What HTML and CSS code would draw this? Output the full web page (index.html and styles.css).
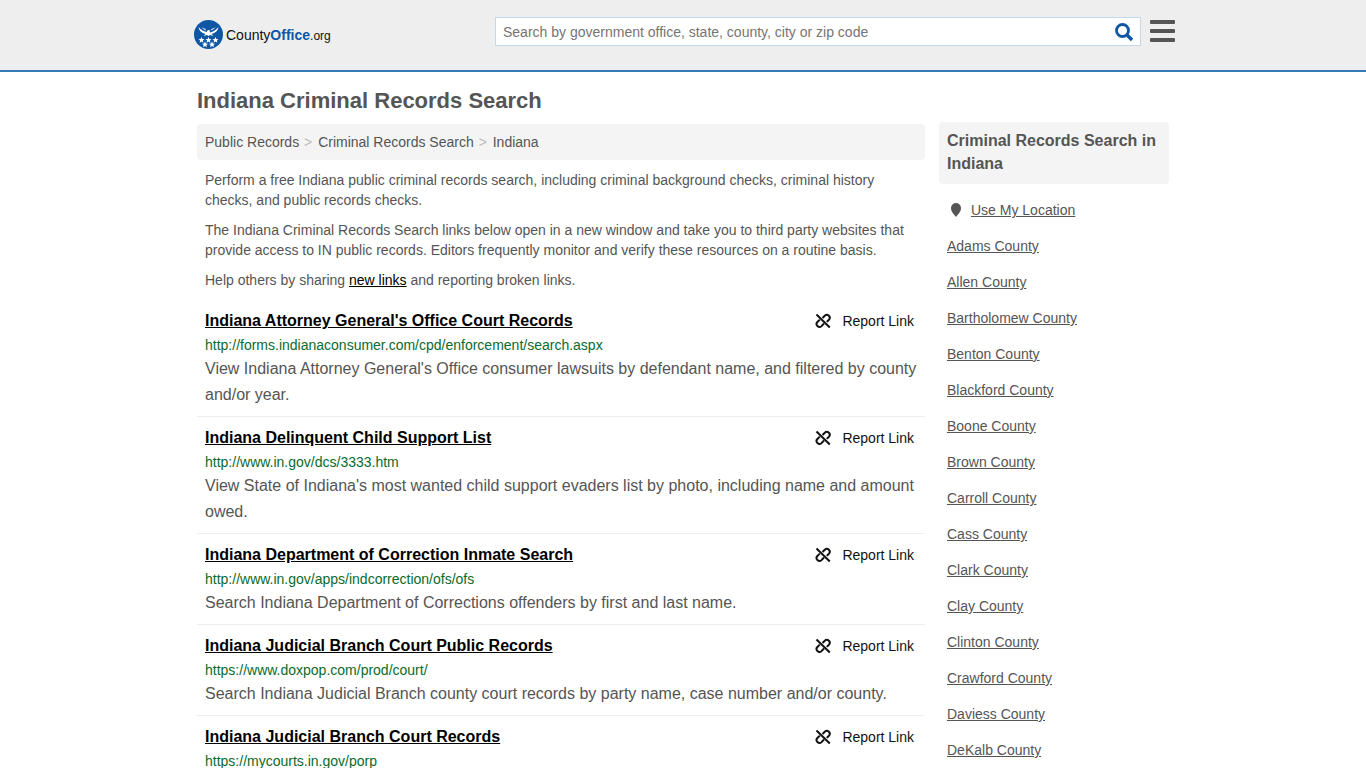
FILE: index.html
```html
<!DOCTYPE html>
<html lang="en">
<head>
    <meta charset="UTF-8">
    <meta name="viewport" content="width=device-width, initial-scale=1.0">
    <title>Indiana Criminal Records Search</title>
    <link rel="stylesheet" href="styles.css">
</head>
<body>

    <!-- icons used more than once -->
    <svg class="sprite" aria-hidden="true">
        <symbol id="broken-link" viewBox="0 0 16 16">
            <g fill="none" stroke="#111" stroke-width="2">
                <path d="M1.500 1.500 14.800 14.500"/>
                <path d="M7.500 5 9.800 2.700a2.900 2.900 0 0 1 4.100 4.100L11.800 8.900"/>
                <path d="M9 10.500 6.500 13.100a2.900 2.900 0 0 1-4.100-4.100L4.800 6.600"/>
            </g>
        </symbol>
    </svg>

    <header class="header">
        <div class="container header-row">
            <a class="logo" href="#" aria-label="CountyOffice.org">
                <svg class="logo-icon" viewBox="0 0 58 58" aria-hidden="true">
                    <circle cx="29" cy="29" r="29" fill="#0f57a5"/>
                    <g fill="#fff">
                        <path d="M9 14c5 6 10 8 16 10l2-3 3-1 3 2-2 1 1 2c7-2 12-5 17-11-1 7-6 12-14 14l4 4-7-2-3 2-3-2-7 2 4-4C15 26 10 21 9 14z"/>
                        <path d="M14 13c3 4 6 6 10 8l-1-3c-4-1-7-3-9-5zM44 13c-3 4-6 6-10 8l1-3c4-1 7-3 9-5z"/>
                        <path id="star" d="M15 34l1.800 4 4.200.4-3.200 2.800.9 4.200-3.700-2.200-3.700 2.200.9-4.200-3.200-2.800 4.200-.4z"/>
                        <use href="#star" x="14"/>
                        <use href="#star" x="28"/>
                        <use href="#star" x="7" y="9"/>
                        <use href="#star" x="21" y="9"/>
                    </g>
                </svg>
                <span class="logo-text">County<b>Office</b><span class="logo-org">.org</span></span>
            </a>
            <form class="search">
                <input class="search-input" type="text" aria-label="Search" placeholder="Search by government office, state, county, city or zip code">
                <button class="search-btn" type="submit" aria-label="Submit search">
                    <svg width="18" height="18" viewBox="0 0 18 18" aria-hidden="true">
                        <g fill="none" stroke="#0f57a5">
                            <circle cx="7.500" cy="7.500" r="6" stroke-width="2.800"/>
                            <path d="M12 12l5 5" stroke-width="3.400"/>
                        </g>
                    </svg>
                </button>
            </form>
            <button class="menu-btn" type="button" aria-label="Menu">
                <span></span><span></span><span></span>
            </button>
        </div>
    </header>

    <div class="container page">
        <main class="main">
            <h1>Indiana Criminal Records Search</h1>
            <nav class="breadcrumb" aria-label="Breadcrumb">
                <a href="#">Public Records</a>
                <span class="sep">&gt;</span>
                <a href="#">Criminal Records Search</a>
                <span class="sep">&gt;</span>
                <a href="#">Indiana</a>
            </nav>
            <div class="intro">
                <p>Perform a free Indiana public criminal records search, including criminal background checks, criminal history checks, and public records checks.</p>
                <p>The Indiana Criminal Records Search links below open in a new window and take you to third party websites that provide access to IN public records. Editors frequently monitor and verify these resources on a routine basis.</p>
                <p>Help others by sharing <a href="#">new links</a> and reporting broken links.</p>
            </div>

            <ul class="results">
                <li class="result">
                    <div class="result-head">
                        <a class="result-title" href="#">Indiana Attorney General's Office Court Records</a>
                        <a class="report" href="#"><svg aria-hidden="true"><use href="#broken-link"/></svg>Report Link</a>
                    </div>
                    <div class="result-url">http://forms.indianaconsumer.com/cpd/enforcement/search.aspx</div>
                    <p class="result-desc">View Indiana Attorney General's Office consumer lawsuits by defendant name, and filtered by county and/or year.</p>
                </li>
                <li class="result">
                    <div class="result-head">
                        <a class="result-title" href="#">Indiana Delinquent Child Support List</a>
                        <a class="report" href="#"><svg aria-hidden="true"><use href="#broken-link"/></svg>Report Link</a>
                    </div>
                    <div class="result-url">http://www.in.gov/dcs/3333.htm</div>
                    <p class="result-desc">View State of Indiana's most wanted child support evaders list by photo, including name and amount owed.</p>
                </li>
                <li class="result">
                    <div class="result-head">
                        <a class="result-title" href="#">Indiana Department of Correction Inmate Search</a>
                        <a class="report" href="#"><svg aria-hidden="true"><use href="#broken-link"/></svg>Report Link</a>
                    </div>
                    <div class="result-url">http://www.in.gov/apps/indcorrection/ofs/ofs</div>
                    <p class="result-desc">Search Indiana Department of Corrections offenders by first and last name.</p>
                </li>
                <li class="result">
                    <div class="result-head">
                        <a class="result-title" href="#">Indiana Judicial Branch Court Public Records</a>
                        <a class="report" href="#"><svg aria-hidden="true"><use href="#broken-link"/></svg>Report Link</a>
                    </div>
                    <div class="result-url">https://www.doxpop.com/prod/court/</div>
                    <p class="result-desc">Search Indiana Judicial Branch county court records by party name, case number and/or county.</p>
                </li>
                <li class="result">
                    <div class="result-head">
                        <a class="result-title" href="#">Indiana Judicial Branch Court Records</a>
                        <a class="report" href="#"><svg aria-hidden="true"><use href="#broken-link"/></svg>Report Link</a>
                    </div>
                    <div class="result-url">https://mycourts.in.gov/porp</div>
                </li>
            </ul>
        </main>

        <aside class="sidebar">
            <h2>Criminal Records Search in Indiana</h2>
            <ul class="counties">
                <li class="location">
                    <svg width="12" height="14" viewBox="0 0 12 14" aria-hidden="true"><path fill="#555" d="M6 0a5 5 0 0 1 5 5c0 4-3 6-5 9C4 11 1 9 1 5a5 5 0 0 1 5-5z"/></svg>
                    <a href="#">Use My Location</a>
                </li>
                <li><a href="#">Adams County</a></li>
                <li><a href="#">Allen County</a></li>
                <li><a href="#">Bartholomew County</a></li>
                <li><a href="#">Benton County</a></li>
                <li><a href="#">Blackford County</a></li>
                <li><a href="#">Boone County</a></li>
                <li><a href="#">Brown County</a></li>
                <li><a href="#">Carroll County</a></li>
                <li><a href="#">Cass County</a></li>
                <li><a href="#">Clark County</a></li>
                <li><a href="#">Clay County</a></li>
                <li><a href="#">Clinton County</a></li>
                <li><a href="#">Crawford County</a></li>
                <li><a href="#">Daviess County</a></li>
                <li><a href="#">DeKalb County</a></li>
            </ul>
        </aside>
    </div>

</body>
</html>
```
FILE: styles.css
```css
* {
    margin: 0;
    padding: 0;
    box-sizing: border-box;
}

body {
    font-family: "Liberation Sans", Arial, Helvetica, sans-serif;
    font-size: 14px;
    line-height: 20px;
    color: #555;
    background: #fff;
}

ul {
    list-style: none;
}

button {
    background: none;
    border: none;
    cursor: pointer;
}

.sprite {
    display: none;
}

.container {
    max-width: 972px;
    margin: 0 auto;
}

/* header */
.header {
    background: #eee;
    border-bottom: 2px solid #337ab7;
}

.header-row {
    display: flex;
    align-items: flex-start;
    height: 70px;
    padding-top: 17px;
}

.logo {
    display: flex;
    align-items: center;
    gap: 3px;
    margin: 3px 0 0 -3px;
    color: #111;
    text-decoration: none;
}

.logo-icon {
    width: 29px;
    height: 29px;
}

.logo-text {
    padding-top: 2px;
    font-size: 14px;
}

.logo-text b {
    color: #0f57a5;
}

.logo-org {
    font-size: 12px;
}

.search {
    display: flex;
    width: 646px;
    height: 29px;
    margin-left: auto;
    background: #fff;
    border: 1px solid #c3d9ea;
}

.search-input {
    flex: 1;
    padding: 0 7px;
    border: none;
    outline: none;
    background: none;
    font-family: inherit;
    font-size: 14px;
    color: #555;
}

.search-input::placeholder {
    color: #757575;
}

.search-btn {
    display: flex;
    align-items: center;
    justify-content: center;
    width: 32px;
}

.menu-btn {
    display: flex;
    flex-direction: column;
    gap: 5px;
    width: 25px;
    margin: 3px -6px 0 9px;
}

.menu-btn span {
    height: 4px;
    border-radius: 1px;
    background: #555;
}

/* page */
.page {
    display: flex;
    align-items: flex-start;
    gap: 14px;
    padding-top: 14px;
}

.main {
    flex: 1;
}

h1 {
    margin-bottom: 8px;
    font-size: 22px;
    line-height: 30px;
}

.breadcrumb {
    padding: 8px;
    border-radius: 4px;
    background: #f4f4f4;
}

.breadcrumb a {
    color: #555;
    text-decoration: none;
}

.breadcrumb .sep {
    padding: 0 2px 0 1px;
    color: #bbb;
}

.intro {
    padding: 10px 8px 0;
}

.intro p {
    margin-bottom: 10px;
}

.intro a {
    color: #000;
}

/* results */
.result {
    padding: 8px;
    border-bottom: 1px solid #eee;
}

.result-head {
    display: flex;
    justify-content: space-between;
    line-height: 26px;
}

.result-title {
    font-size: 16px;
    font-weight: bold;
    color: #000;
}

.report {
    display: flex;
    align-items: center;
    gap: 11px;
    margin-right: 3px;
    color: #111;
    text-decoration: none;
}

.report svg {
    width: 16px;
    height: 16px;
}

.result-url {
    line-height: 22px;
    color: #0a6b2d;
}

.result-desc {
    font-size: 16px;
    line-height: 26px;
}

/* sidebar */
.sidebar {
    width: 230px;
    margin-top: 36px;
}

.sidebar h2 {
    margin-bottom: 8px;
    padding: 7px 8px 9px;
    border-radius: 4px;
    background: #f4f4f4;
    font-size: 16px;
    line-height: 23px;
}

.counties li {
    padding: 8px;
}

.counties a {
    color: #555;
}

.counties .location {
    display: flex;
    align-items: center;
    gap: 9px;
    padding-left: 11px;
}
```
